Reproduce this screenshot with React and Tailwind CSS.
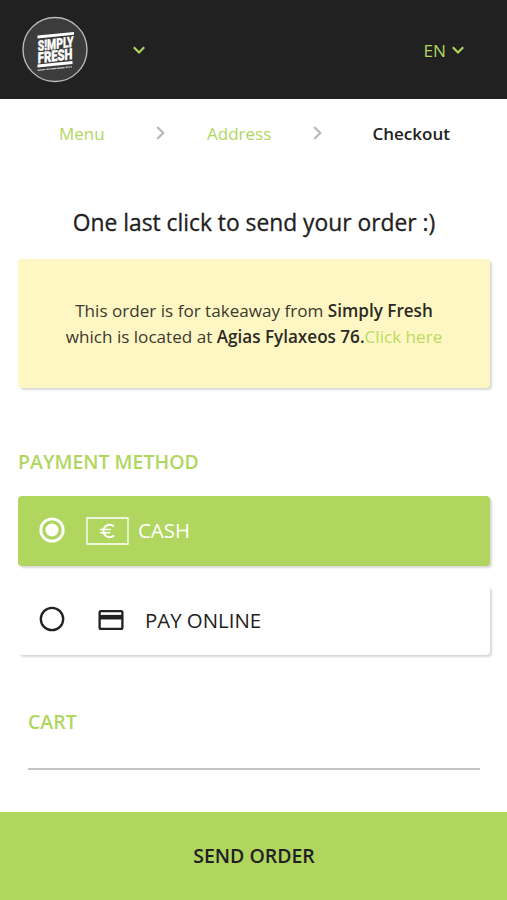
import { useState } from 'react'
import clsx from 'clsx'

const METHODS = [
  { id: 'cash', label: 'CASH', icon: CashIcon },
  { id: 'online', label: 'PAY ONLINE', icon: CardIcon },
]

function Logo() {
  return (
    <svg viewBox="0 0 66 66" className="mt-[2px] block size-[66px] overflow-visible" fill="#fff">
      <circle cx="33" cy="32.5" r="32" fill="#3d3c3d" stroke="#b8b8b8" strokeWidth="1.4" />
      <path d="M15.5 18.6 52 14.9v2.9L15.5 21.5zM15.5 47.6 50.5 44v2.9L15.5 50.5z" />
      <g
        transform="matrix(1 -0.116 0 1 15.5 0)"
        fontFamily="Roboto, sans-serif"
        fontWeight="900"
        stroke="#fff"
        strokeWidth="0.4"
      >
        <text x="0.3" y="34" fontSize="14.4" textLength="35.8" lengthAdjust="spacingAndGlyphs">S!MPLY</text>
        <text x="0.3" y="46.2" fontSize="15" textLength="34.6" lengthAdjust="spacingAndGlyphs">FRESH</text>
      </g>
      <path d="M15.5 53.3 50 49.8" stroke="#ccc" strokeWidth="1.2" strokeDasharray="8 .9 2.5 .5 1.5 .4 5 .5" />
    </svg>
  )
}

function Chevron({ className }) {
  return (
    <svg viewBox="0 0 12 8" className={className} fill="none" stroke="currentColor" strokeWidth="2.1">
      <path d="M.8 1.2 6 6.4l5.2-5.2" />
    </svg>
  )
}

function Separator() {
  return (
    <svg viewBox="0 0 9 14" className="-mt-0.5 h-[14px] w-[9px] text-[#b9b9b9]" fill="none" stroke="currentColor" strokeWidth="2.3">
      <path d="m1.2 1 6 6-6 6" />
    </svg>
  )
}

function CashIcon() {
  return (
    <svg viewBox="0 0 43 28" className="ml-[21px] mr-[9px] h-7 w-[43px]" fill="none" stroke="currentColor">
      <path d="M1 1h41v26H1z" strokeWidth="1.3" />
      <path d="M28 9.4A6.3 6.3 0 1 0 28 18.6" strokeWidth="2" />
      <path d="M14.2 12.5h10.6M14.2 15.7h9.8" strokeWidth="1.6" />
    </svg>
  )
}

function CardIcon() {
  return (
    <svg viewBox="0 0 26 20" className="ml-[33px] mr-[21px] h-5 w-[26px]" fill="none" stroke="currentColor">
      <rect x="1.6" y="1.2" width="22.8" height="17.6" rx="1.4" strokeWidth="2.3" />
      <path d="M1.6 7.2h22.8" strokeWidth="4.6" />
    </svg>
  )
}

function Radio({ checked }) {
  return (
    <svg viewBox="0 0 26 26" className="-mt-0.5 size-[26px]" fill="none" stroke="currentColor">
      <circle cx="13" cy="13" r="11.2" strokeWidth={checked ? 2.8 : 2.3} />
      {checked && <circle cx="13" cy="13" r="6.5" fill="currentColor" stroke="none" />}
    </svg>
  )
}

export default function App() {
  const [method, setMethod] = useState('cash')

  return (
    <div className="flex h-[900px] w-[507px] flex-col overflow-hidden bg-white font-['Open_Sans',sans-serif] text-[#212121]">
      {/* Header */}
      <header className="flex h-[98.5px] shrink-0 items-center bg-[#212121] pl-[22px] pr-[43px] text-[#b1d65f]">
        <Logo />
        <button className="ml-[45px] pt-0.5">
          <Chevron className="block h-2 w-3" />
        </button>
        <button className="ml-auto flex items-center gap-[6px] pt-[3px] text-[17.2px]">
          EN <Chevron className="-mt-0.5 h-2 w-3" />
        </button>
      </header>

      {/* Steps */}
      <nav className="flex h-[70.5px] shrink-0 items-center pl-[59px] text-[17px] text-[#b1d65f]">
        <a className="w-[97px]">Menu</a>
        <Separator />
        <a className="ml-[42px] w-[106px]">Address</a>
        <Separator />
        <span className="ml-[50.5px] font-semibold text-[#212121]">Checkout</span>
      </nav>

      <main className="flex flex-1 flex-col pl-[18px] pr-[17px]">
        <h1 className="mt-[38px] h-[52px] text-center text-[22.8px] leading-8 [-webkit-text-stroke:0.3px_currentColor]">
          One last click to send your order :)
        </h1>

        <p className="flex h-[129px] items-center justify-center rounded bg-[#fef7c3] text-center text-[17.1px] leading-[26px] text-[#3b3a30] shadow-[2px_2px_2px_rgba(0,0,0,0.15)]">
          <span>
            This order is for takeaway from <b className="font-semibold text-[#2b2a24]">Simply Fresh</b>
            <br />
            which is located at <b className="font-semibold text-[#2b2a24]">Agias Fylaxeos 76.</b>
            <a className="text-[#b9dc62]">Click here</a>
          </span>
        </p>

        <h2 className="mt-[60px] text-[19.5px] font-semibold leading-[27px] text-[#b1d65f]">PAYMENT METHOD</h2>

        <div className="mt-[21px] flex flex-col gap-5">
          {METHODS.map(({ id, label, icon: Icon }) => (
            <button
              key={id}
              onClick={() => setMethod(id)}
              className={clsx(
                'flex h-[69.5px] items-center rounded pl-[21px] text-[20.4px] shadow-[2px_2px_2px_rgba(0,0,0,0.15)]',
                method === id ? 'bg-[#b1d65f] text-white' : 'bg-white text-[#212121]',
              )}
            >
              <Radio checked={method === id} />
              <Icon />
              {label}
            </button>
          ))}
        </div>

        {/* Cart */}
        <section className="mx-[10px] mt-[53px] h-[62px] border-b-2 border-[#c4c4c4]">
          <h2 className="text-[19.5px] font-semibold leading-[27px] text-[#b1d65f]">CART</h2>
        </section>
      </main>

      <button className="h-[88px] shrink-0 bg-[#b1d65f] pl-px text-[19.5px] font-semibold">SEND ORDER</button>
    </div>
  )
}
